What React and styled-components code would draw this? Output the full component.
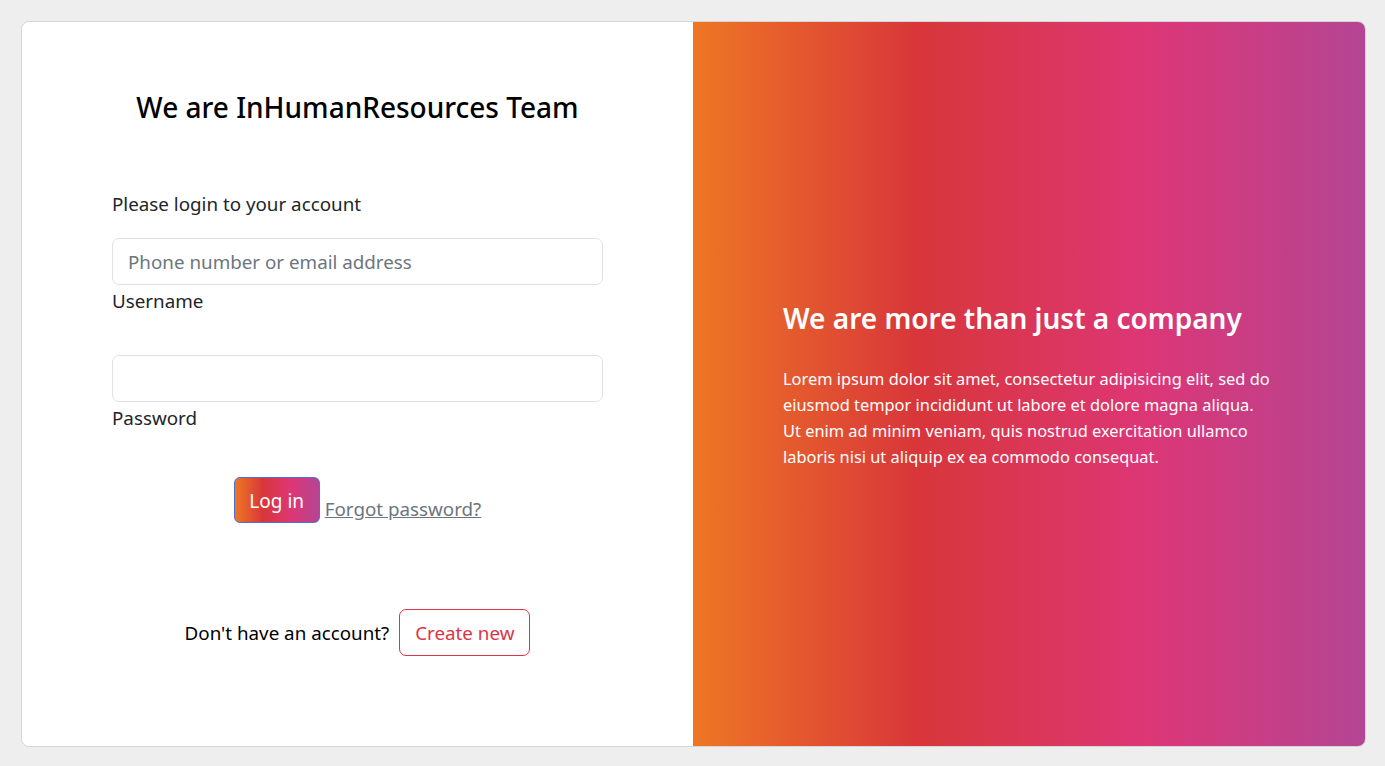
import React from 'react'
import styled, { createGlobalStyle } from 'styled-components'

const GlobalStyle = createGlobalStyle`
  html, body {
    margin: 0;
    padding: 0;
    background: #eeeeee;
    font-family: "Noto Sans", "Open Sans", sans-serif;
    color: #212529;
  }
`

const brandGradient = 'linear-gradient(to right, #ee7724, #d8363a, #dd3675, #b44593)'

const Page = styled.div`
  height: 766px;
  box-sizing: border-box;
  padding: 21px 19px 19px 21px;
`

const Card = styled.div`
  height: 100%;
  box-sizing: border-box;
  display: grid;
  grid-template-columns: 671px 1fr;
  background: #fff;
  border: 1px solid #d6d6d6;
  border-radius: 8px;
  overflow: hidden;
`

const FormSide = styled.div`
  padding: 67px 90px 0;
  display: flex;
  flex-direction: column;
`

const Title = styled.h4`
  margin: 0 0 64px;
  text-align: center;
  font-size: 28px;
  font-weight: 500;
  line-height: 36px;
  color: #000;
`

const Text = styled.p`
  margin: 0 0 19px;
  font-size: 18.8px;
  line-height: 30px;
`

const Field = styled.div`
  display: flex;
  flex-direction: column;
  margin-bottom: ${p => p.$gap || 0}px;
`

const Input = styled.input`
  box-sizing: border-box;
  height: 47px;
  width: 100%;
  padding: 0 15px;
  border: 1px solid #dee2e6;
  border-radius: 7px;
  font-family: inherit;
  font-size: 18.8px;
  color: #212529;
  outline: none;
  &::placeholder {
    color: #6c757d;
  }
`

const Label = styled.label`
  margin-top: 1px;
  font-size: 18.8px;
  line-height: 30px;
`

const ActionRow = styled.div`
  display: flex;
  justify-content: center;
  align-items: flex-end;
  gap: 5px;
  margin-top: 44px;
`

const GradientButton = styled.button`
  height: 46px;
  width: 86px;
  padding: 2px 0 0;
  border: 1px solid #4a6fd6;
  border-radius: 6px;
  background: ${brandGradient};
  color: #fff;
  font-family: inherit;
  font-size: 19px;
`

const MutedLink = styled.a`
  color: #6c757d;
  font-size: 18.8px;
  line-height: 30px;
  margin-bottom: -1px;
  text-decoration: underline;
  cursor: pointer;
`

const SignupRow = styled.div`
  display: flex;
  justify-content: center;
  align-items: center;
  gap: 10px;
  margin-top: 86px;
`

const SignupText = styled.span`
  font-size: 18.8px;
  color: #000;
`

const OutlineButton = styled.button`
  height: 47px;
  padding: 0 15px;
  background: #fff;
  border: 1px solid #dc3545;
  border-radius: 7px;
  color: #dc3545;
  font-family: inherit;
  font-size: 18.8px;
`

const InfoSide = styled.div`
  background: ${brandGradient};
  display: flex;
  align-items: center;
  padding: 0 92px 0 90px;
  color: #fff;
`

const InfoTitle = styled.h4`
  margin: 1px 0 30px;
  font-size: 28px;
  font-weight: 600;
  line-height: 36px;
`

const InfoText = styled.p`
  margin: 0;
  font-size: 16.4px;
  line-height: 26px;
`

export default function App() {
  return (
    <>
      <GlobalStyle />
      <Page>
        <Card>
          <FormSide>
            <Title>We are InHumanResources Team</Title>
            <Text>Please login to your account</Text>
            <Field $gap={39}>
              <Input type="email" placeholder="Phone number or email address" />
              <Label>Username</Label>
            </Field>
            <Field>
              <Input type="password" />
              <Label>Password</Label>
            </Field>
            <ActionRow>
              <GradientButton type="button">Log in</GradientButton>
              <MutedLink>Forgot password?</MutedLink>
            </ActionRow>
            <SignupRow>
              <SignupText>Don't have an account?</SignupText>
              <OutlineButton type="button">Create new</OutlineButton>
            </SignupRow>
          </FormSide>
          <InfoSide>
            <div>
              <InfoTitle>We are more than just a company</InfoTitle>
              <InfoText>
                Lorem ipsum dolor sit amet, consectetur adipisicing elit, sed do
                eiusmod tempor incididunt ut labore et dolore magna aliqua.
                Ut enim ad minim veniam, quis nostrud exercitation ullamco
                laboris nisi ut aliquip ex ea commodo consequat.
              </InfoText>
            </div>
          </InfoSide>
        </Card>
      </Page>
    </>
  )
}
